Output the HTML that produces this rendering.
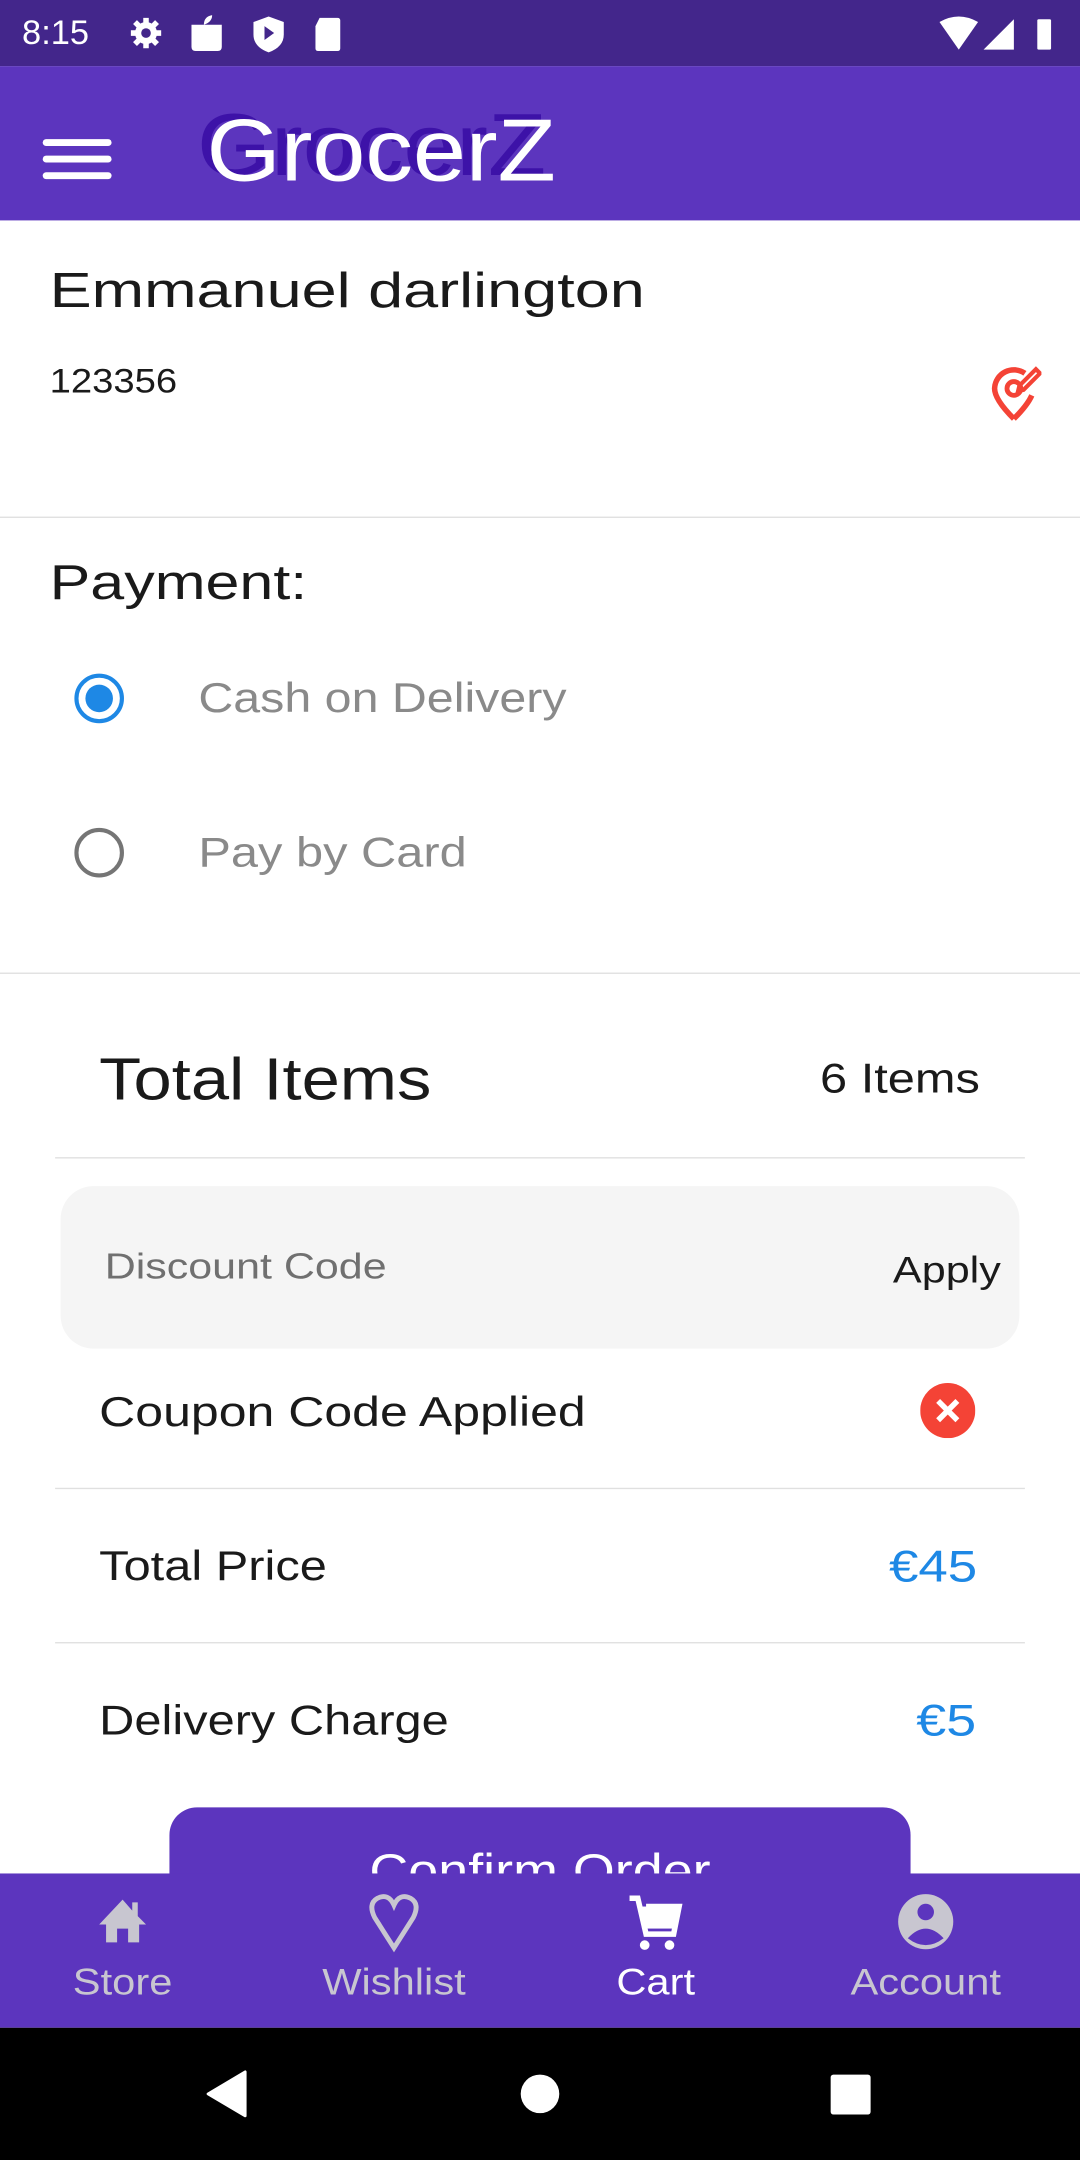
<!DOCTYPE html>
<html><head><meta charset="utf-8"><style>
html,body{margin:0;padding:0;background:#fff;overflow:hidden}
body{width:1080px;height:2160px}
#w{width:784px;height:1568px;transform:scale(1.377551);transform-origin:0 0;position:relative;font-family:"Liberation Sans",sans-serif;color:#1a1a1a}
.a{position:absolute;white-space:nowrap}
.l{transform-origin:0 50%}
.r{transform-origin:100% 50%}
.hr{position:absolute;height:1px;background:#e0e0e0}
</style></head><body><div id="w">
<div class="a" style="left:0;top:0;width:784px;height:48px;background:#43268b"></div>
<div class="a" style="left:16px;top:10px;font-size:25px;color:#fff">8:15</div>
<svg class="a" style="left:92px;top:10px" width="170" height="30" viewBox="0 0 170 30">
<g stroke="#fff" stroke-width="4"><line x1="14" y1="3" x2="14" y2="25"/><line x1="3" y1="14" x2="25" y2="14"/><line x1="6" y1="6" x2="22" y2="22"/><line x1="22" y1="6" x2="6" y2="22"/></g>
<circle cx="14" cy="14" r="8" fill="#fff"/><circle cx="14" cy="14" r="3.5" fill="#43268b"/>
<path d="M47 8h22v16q0 3-3 3h-16q-3 0-3-3z" fill="#fff"/><path d="M56 8q0-6 6-7q0 5-6 7" fill="#fff"/>
<path d="M103 2l11 4v9q0 9-11 13q-11-4-11-13v-9z" fill="#fff"/><path d="M100 9l7 5-7 5z" fill="#43268b"/>
<path d="M140 3h13q2 0 2 2v20q0 2-2 2h-14q-2 0-2-2v-16z" fill="#fff"/>
</svg>
<svg class="a" style="left:678px;top:12px" width="96" height="26" viewBox="0 0 96 26">
<path d="M4 4q14-8 28 0l-14 20z" fill="#fff"/>
<path d="M58 2v22h-22z" fill="#fff"/>
<rect x="75" y="2" width="10" height="22" rx="1" fill="#fff"/>
</svg>
<div class="a" style="left:0;top:48px;width:784px;height:112px;background:#5c35be"></div>
<div class="a" style="left:31px;top:101px;width:50px;height:5px;background:#fff;border-radius:3px"></div>
<div class="a" style="left:31px;top:113px;width:50px;height:5px;background:#fff;border-radius:3px"></div>
<div class="a" style="left:31px;top:125px;width:50px;height:5px;background:#fff;border-radius:3px"></div>
<div class="a l" style="left:143px;top:68px;font-size:64px;color:#3d12a8;transform:scaleX(1.08)">GrocerZ</div>
<div class="a l" style="left:150px;top:72px;font-size:64px;color:#fff;transform:scaleX(1.08)">GrocerZ</div>

<div class="a l" style="left:36px;top:190px;font-size:36px;transform:scaleX(1.27)">Emmanuel darlington</div>
<div class="a l" style="left:36px;top:263px;font-size:25px;transform:scaleX(1.11)">123356</div>
<svg class="a" style="left:716px;top:264px" width="40" height="44" viewBox="0 0 40 44">
<path d="M20 40q-14-14-14-22a14 14 0 0 1 22-11" fill="none" stroke="#f44336" stroke-width="4"/>
<path d="M20 40q10-10 13-17" fill="none" stroke="#f44336" stroke-width="4"/>
<circle cx="20" cy="18" r="5" fill="none" stroke="#f44336" stroke-width="3.5"/>
<path d="M24 16l12-12 3 3-12 12-4 1z" fill="none" stroke="#f44336" stroke-width="3"/>
</svg>
<div class="hr" style="left:0;top:375px;width:784px"></div>
<div class="a l" style="left:36px;top:402px;font-size:36px;transform:scaleX(1.23)">Payment:</div>
<div class="a" style="left:54px;top:489px;width:30px;height:30px;border:3px solid #1e88e5;border-radius:50%"></div>
<div class="a" style="left:62px;top:497px;width:20px;height:20px;background:#1e88e5;border-radius:50%"></div>
<div class="a l" style="left:144px;top:491px;font-size:30px;color:#8a8a8a;transform:scaleX(1.17)">Cash on Delivery</div>
<div class="a" style="left:54px;top:601px;width:30px;height:30px;border:3px solid #757575;border-radius:50%"></div>
<div class="a l" style="left:144px;top:603px;font-size:30px;color:#8a8a8a;transform:scaleX(1.18)">Pay by Card</div>
<div class="hr" style="left:0;top:706px;width:784px"></div>
<div class="a l" style="left:72px;top:760px;font-size:43px;transform:scaleX(1.16)">Total Items</div>
<div class="a r" style="right:73px;top:767px;font-size:30px;transform:scaleX(1.18)">6 Items</div>
<div class="hr" style="left:40px;top:840px;width:704px"></div>
<div class="a" style="left:44px;top:861px;width:696px;height:118px;background:#f5f5f5;border-radius:24px"></div>
<div class="a l" style="left:76px;top:904px;font-size:26px;color:#707070;transform:scaleX(1.2)">Discount Code</div>
<div class="a r" style="right:57px;top:907px;font-size:27px;transform:scaleX(1.16)">Apply</div>
<div class="a l" style="left:72px;top:1009px;font-size:30px;transform:scaleX(1.21)">Coupon Code Applied</div>
<svg class="a" style="left:668px;top:1004px" width="40" height="40" viewBox="0 0 40 40"><circle cx="20" cy="20" r="20" fill="#f44336"/><path d="M13 13l14 14M27 13l-14 14" stroke="#fff" stroke-width="4"/></svg>
<div class="hr" style="left:40px;top:1080px;width:704px"></div>
<div class="a l" style="left:72px;top:1121px;font-size:30px;transform:scaleX(1.18)">Total Price</div>
<div class="a r" style="right:75px;top:1119px;font-size:32px;color:#1e88e5;transform:scaleX(1.2)">€45</div>
<div class="hr" style="left:40px;top:1192px;width:704px"></div>
<div class="a l" style="left:72px;top:1233px;font-size:30px;transform:scaleX(1.18)">Delivery Charge</div>
<div class="a r" style="right:75px;top:1231px;font-size:32px;color:#1e88e5;transform:scaleX(1.22)">€5</div>
<div class="a" style="left:123px;top:1312px;width:538px;height:80px;background:#5c35be;border-radius:20px"></div>
<div class="a" style="left:123px;top:1340px;width:538px;text-align:center;font-size:34px;color:#fff;transform:scaleX(1.15)">Confirm Order</div>
<div class="a" style="left:0;top:1360px;width:784px;height:112px;background:#5c35be"></div>
<svg class="a" style="left:0;top:1372px" width="784" height="50" viewBox="0 0 784 50">
<path d="M89 7l-17 18h5v13h8v-10h8v10h8v-13h5l-6-6v-10h-4v6z" fill="#c8c6d0"/>
<path d="M286 42l-14-22q-5-10 2-14q8-4 12 5q4-9 12-5q7 4 2 14z" fill="none" stroke="#c8c6d0" stroke-width="3.5"/>
<path d="M457 6h6l6 26h20l4-20h-24" fill="none" stroke="#fff" stroke-width="4"/><rect x="466" y="12" width="25" height="16" fill="#fff"/>
<circle cx="468" cy="40" r="3.5" fill="#fff"/><circle cx="486" cy="40" r="3.5" fill="#fff"/>
<circle cx="672" cy="23" r="20" fill="#c8c6d0"/><circle cx="672" cy="16" r="6" fill="#5c35be"/><path d="M659 35q13-14 26 0q-13 10-26 0" fill="#5c35be"/>
</svg>
<div class="a" style="left:39px;top:1424px;width:100px;text-align:center;font-size:27px;color:#c8c6d0;transform:scaleX(1.12)">Store</div>
<div class="a" style="left:226px;top:1424px;width:120px;text-align:center;font-size:27px;color:#c8c6d0;transform:scaleX(1.12)">Wishlist</div>
<div class="a" style="left:426px;top:1424px;width:100px;text-align:center;font-size:27px;color:#fff;transform:scaleX(1.12)">Cart</div>
<div class="a" style="left:602px;top:1424px;width:140px;text-align:center;font-size:27px;color:#c8c6d0;transform:scaleX(1.12)">Account</div>
<div class="a" style="left:0;top:1472px;width:784px;height:96px;background:#000"></div>
<svg class="a" style="left:0;top:1472px" width="784" height="96" viewBox="0 0 784 96">
<path d="M178 32v32l-27-16z" fill="#fff" stroke="#fff" stroke-width="2" stroke-linejoin="round"/>
<circle cx="392" cy="48" r="14" fill="#fff"/>
<rect x="603" y="34" width="29" height="29" rx="2" fill="#fff"/>
</svg>
</div></body></html>
